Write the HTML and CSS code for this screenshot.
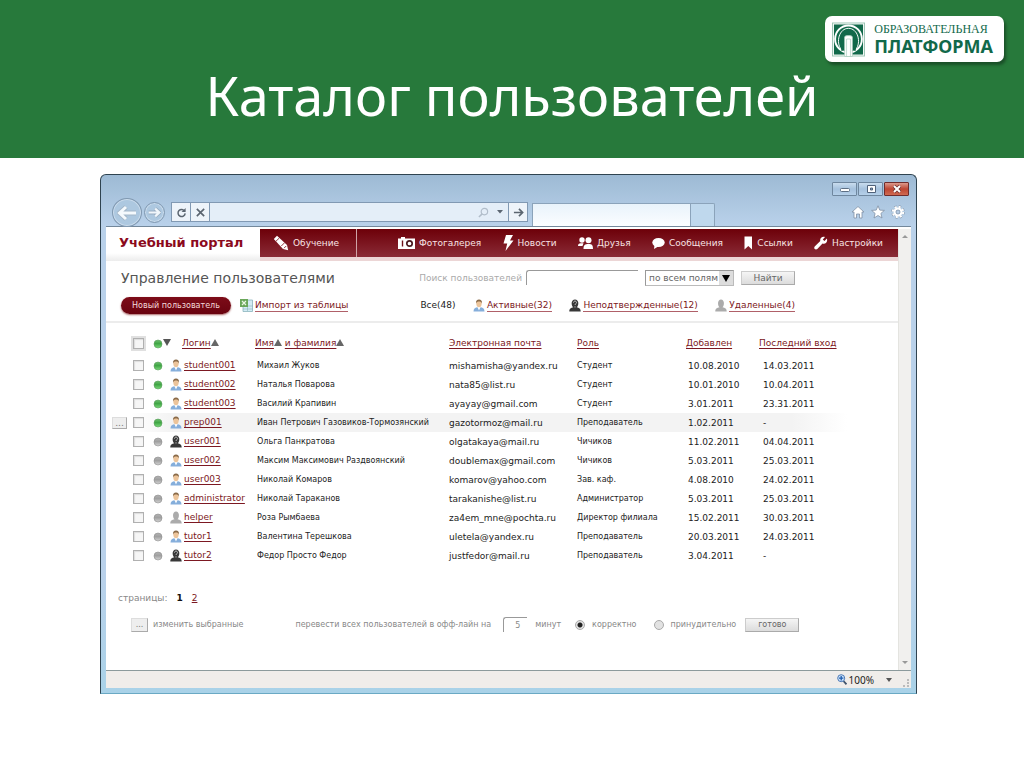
FILE: index.html
```html
<!DOCTYPE html>
<html lang="ru">
<head>
<meta charset="utf-8">
<title>Каталог пользователей</title>
<link rel="stylesheet" href="styles.css">
</head>
<body>
<svg class="defs" aria-hidden="true">
  <defs>
    <linearGradient id="ball-green" x1="0" y1="0" x2="0" y2="1"><stop offset="0" stop-color="#6fbf70"/><stop offset=".45" stop-color="#3fa544"/><stop offset="1" stop-color="#7ddb7c"/></linearGradient>
    <linearGradient id="ball-gray" x1="0" y1="0" x2="0" y2="1"><stop offset="0" stop-color="#b4b4b4"/><stop offset=".45" stop-color="#a0a0a0"/><stop offset="1" stop-color="#d4d4d4"/></linearGradient>
    <symbol id="on" viewBox="0 0 10 10"><circle cx="5" cy="5" r="4" fill="url(#ball-green)" stroke="#5a9e5c" stroke-width=".6"/></symbol>
    <symbol id="off" viewBox="0 0 10 10"><circle cx="5" cy="5" r="4" fill="url(#ball-gray)" stroke="#8d8d8d" stroke-width=".6"/></symbol>
    <symbol id="user" viewBox="0 0 12 13"><path d="M.5 12.6C.5 9.5 2 8.6 4 8.2h4c2 .4 3.500 1.300 3.500 4.400z" fill="#85aedb"/><path d="M4.400 8h3.200L6 11.500z" fill="#fff"/><ellipse cx="6" cy="4.600" rx="2.700" ry="3.600" fill="#ecc49a"/><path d="M3 4.500C2.700 1.600 4 .4 6 .4s3.300 1.200 3 4.100C8.400 3 7.500 2.600 6 2.600S3.600 3 3 4.500z" fill="#8a6a48"/></symbol>
    <symbol id="pending" viewBox="0 0 12 13"><path d="M.3 12.600C.3 9.600 1.800 9 4.300 8.300 1.800 6 2 .4 6 .4s4.200 5.600 1.700 7.900c2.500.7 4 1.300 4 4.300z" fill="#383838"/><path d="M4.500 3.600c0-2 3-2 3 0C7.500 4.800 6 4.700 6 6M6 7.300v1.200" fill="none" stroke="#c4c4c4" stroke-width="1"/></symbol>
    <symbol id="removed" viewBox="0 0 12 13"><path d="M.3 12.600C.3 9.600 1.800 9 4.500 8.300 2.300 6 2.500.4 6 .4s3.700 5.600 1.500 7.900c2.700.7 4.200 1.300 4.200 4.300z" fill="#ababab"/></symbol>
  </defs>
</svg>

<header class="banner">
  <div class="brand">
    <svg class="brand-mark" viewBox="0 0 34 35">
      <rect x=".5" y=".5" width="33" height="34" fill="#fff" stroke="#9cc5b3"/>
      <rect x="2" y="2" width="30" height="31" fill="#11694a"/>
      <ellipse cx="17" cy="17" rx="13.800" ry="14" fill="#11694a" stroke="#fff" stroke-width="2"/>
      <path d="M9.500 28C3.500 20 7.500 6 17 6s13.500 14 7.500 22" fill="none" stroke="#fff" stroke-width="1"/>
      <path d="M10.500 29V12.500h13V29" fill="none" stroke="#11694a" stroke-width="2"/>
      <path d="M13 35V15c0-2 8-2 8 0v20z" fill="#fff" stroke="#a8cdbc" stroke-width=".8"/>
      <path d="M15 35V17h4v18" fill="none" stroke="#a8cdbc" stroke-width=".7"/>
    </svg>
    <div class="brand-text"><span class="brand-top">ОБРАЗОВАТЕЛЬНАЯ</span><span class="brand-bottom">ПЛАТФОРМА</span></div>
  </div>
  <h1>Каталог пользователей</h1>
</header>

<main class="stage">
<section class="window">
  <div class="titlebar">
    <button class="wbtn" aria-label="Свернуть"><svg viewBox="0 0 12 10"><rect x="1.500" y="4.500" width="9" height="3" rx="1" fill="#fff" stroke="#5d6f84"/></svg></button>
    <button class="wbtn" aria-label="Развернуть"><svg viewBox="0 0 12 10"><path d="M2.500 1.500h8v7h-8z" fill="#fff" stroke="#50627a"/><path d="M5.500 4h2v2h-2z" fill="#8eaac8" stroke="#50627a"/></svg></button>
    <button class="wbtn close" aria-label="Закрыть"><svg viewBox="0 0 12 10"><path d="M3 2l6 6M9 2L3 8" stroke="#6b2f2f" stroke-width="3.400"/><path d="M3 2l6 6M9 2L3 8" stroke="#fff" stroke-width="2"/></svg></button>
  </div>

  <div class="toolbar">
    <button class="round big" aria-label="Назад"><svg viewBox="0 0 20 16"><path d="M9 2L2.500 8 9 14M3 8h16" fill="none" stroke="#a3b6c8" stroke-width="5"/><path d="M9 2L2.500 8 9 14M3 8h16" fill="none" stroke="#f4f9fd" stroke-width="3"/></svg></button>
    <button class="round" aria-label="Вперёд"><svg viewBox="0 0 20 16"><path d="M11 2l6.500 6L11 14M17 8H1" fill="none" stroke="#98adc2" stroke-width="6"/><path d="M11 2l6.500 6L11 14M17 8H1" fill="none" stroke="#f0f6fb" stroke-width="3.400"/></svg></button>
    <div class="address">
      <button aria-label="Обновить"><svg viewBox="0 0 12 12"><path d="M9.500 4.600A3.900 3.900 0 1 0 10 7" fill="none" stroke="#5b6570" stroke-width="1.600"/><path d="M10.500 1v4.500H6z" fill="#5b6570"/></svg></button>
      <button aria-label="Остановить"><svg viewBox="0 0 12 12"><path d="M2 2l8 8M10 2l-8 8" stroke="#5b6570" stroke-width="1.800"/></svg></button>
      <input type="text" aria-label="Адрес">
      <svg class="find" viewBox="0 0 12 12"><circle cx="7" cy="5" r="3.500" fill="none" stroke="#b1bdca" stroke-width="1.300"/><path d="M4.500 7.500L1 11" stroke="#b1bdca" stroke-width="1.600"/></svg>
      <svg class="drop" viewBox="0 0 6 4"><path d="M0 0h6L3 3.500z" fill="#5b6672"/></svg>
      <button aria-label="Перейти"><svg viewBox="0 0 12 12"><path d="M1 6h9M6.500 2l4 4-4 4" fill="none" stroke="#5b6570" stroke-width="1.800"/></svg></button>
    </div>
    <div class="tab"></div>
    <div class="newtab"></div>
    <div class="tools">
      <svg viewBox="0 0 14 14"><path d="M1 7l6-5.500L13 7h-2v6H8.500V9h-3v4H3V7z" fill="#fff" stroke="#8091a5" stroke-width=".8"/></svg>
      <svg viewBox="0 0 14 14"><path d="M7 .8l1.800 4.300 4.600.3L9.900 8.400l1.100 4.600L7 10.500 3 13l1.100-4.600L.6 5.400l4.600-.3z" fill="#fff" stroke="#8091a5" stroke-width=".8"/></svg>
      <svg viewBox="0 0 14 14"><circle cx="7" cy="7" r="5.400" fill="none" stroke="#8091a5" stroke-width="2.600" stroke-dasharray="2.300 1.940"/><circle cx="7" cy="7" r="5.200" fill="none" stroke="#fff" stroke-width="2" stroke-dasharray="2.100 1.984"/><circle cx="7" cy="7" r="3.400" fill="#b5cbe3" stroke="#fff" stroke-width="2.200"/><circle cx="7" cy="7" r="2" fill="#b5cbe3" stroke="#8091a5" stroke-width=".7"/></svg>
    </div>
  </div>

  <div class="viewport">
    <div class="page">
      <nav class="nav">
        <a class="site" href="#">Учебный портал</a>
        <a class="learn" href="#"><svg width="16" height="16" viewBox="0 0 16 16"><path d="M.8 4L4 .8 14 10l1.200 5.200L10 14z" fill="#fff"/><path d="M3 6.200L6.300 3M8.300 11l3.200-3.200M11 13.200l2.300-2.300" stroke="#7b0a14" stroke-width=".8"/></svg>Обучение</a>
        <div class="menu">
          <a href="#"><svg width="17" height="12" viewBox="0 0 17 12"><path d="M0 1.500h3V0h4v1.500h10V12H0z" fill="#fff"/><path d="M4.500 3.500v6" stroke="#6f1019" stroke-width="1.400"/><circle cx="11.500" cy="6.500" r="2.700" fill="none" stroke="#4b1a20" stroke-width="1.700"/></svg>Фотогалерея</a>
          <a href="#"><svg width="11" height="16" viewBox="0 0 11 16"><path d="M3 0h7L7 5.500h3.500L2.500 16l1.700-7.500H.5z" fill="#fff"/></svg>Новости</a>
          <a href="#"><svg width="15" height="12" viewBox="0 0 15 12"><circle cx="4" cy="3" r="2.700" fill="#fff"/><circle cx="10.500" cy="3.200" r="3" fill="#fff"/><path d="M0 9c0-2 1-2.600 2.500-2.800h3L4.500 9zM5.500 12c0-4 1.500-5 5-5s4.500 1 4.500 5z" fill="#fff"/></svg>Друзья</a>
          <a href="#"><svg width="13" height="12" viewBox="0 0 13 12"><ellipse cx="6.500" cy="5.500" rx="6.200" ry="4.500" fill="#fff"/><path d="M2.500 8L2 12l5-3z" fill="#fff"/></svg>Сообщения</a>
          <a href="#"><svg width="9" height="14" viewBox="0 0 9 14"><path d="M.5.500h7.500v13L4.300 10 .5 13.500z" fill="#fff"/></svg>Ссылки</a>
          <a href="#"><svg width="14" height="14" viewBox="0 0 14 14"><path d="M12.800 2.500L10.500 5 8.800 3.500 11 1C8.500-.3 5.500 2 6.300 5L.7 10.500c-1.500 2 .8 3.800 2.600 2.500L8.500 7.500c3.200 1 5.600-2 4.300-5z" fill="#fff"/></svg>Настройки</a>
        </div>
      </nav>

      <div class="head">
        <h2>Управление пользователями</h2>
        <form class="search">
          <label for="q">Поиск пользователей</label>
          <input class="field" id="q" type="text">
          <span class="pick"><select aria-label="Область поиска"><option>по всем полям</option></select><svg viewBox="0 0 14 14" aria-hidden="true"><path d="M3 4h8l-4 7z" fill="#000"/></svg></span>
          <button class="btn" type="button">Найти</button>
        </form>
      </div>

      <div class="filters">
        <button class="pill">Новый пользователь</button>
        <a class="import" href="#"><svg width="13" height="13" viewBox="0 0 13 13"><path d="M3 1h9.500v11.500H3z" fill="#d3ecf4" stroke="#8ab4bc" stroke-width=".8"/><path d="M7.500 1v11M3 7h9.500M3 10h9.500" stroke="#8ab4bc" stroke-width=".6"/><path d="M0 0h8v8H0z" fill="#6aa75a"/><path d="M2 2l4 4M6 2L2 6" stroke="#eaf6e4" stroke-width="1.200"/></svg><span>Импорт из таблицы</span></a>
        <div class="states">
          <span class="all">Все(48)</span>
          <a href="#"><svg class="ico"><use href="#user"/></svg><span>Активные(32)</span></a>
          <a href="#"><svg class="ico"><use href="#pending"/></svg><span>Неподтвержденные(12)</span></a>
          <a href="#"><svg class="ico"><use href="#removed"/></svg><span>Удаленные(4)</span></a>
        </div>
      </div>

      <table class="users">
        <colgroup><col class="c-more"><col class="c-check"><col class="c-dot"><col class="c-login"><col class="c-name"><col class="c-mail"><col class="c-role"><col class="c-date"><col></colgroup>
        <thead><tr>
          <th></th><th class="allcheck"><input type="checkbox" aria-label="Выбрать всех"></th>
          <th class="sortdot"><svg class="dot"><use href="#on"/></svg><i class="down"></i></th>
          <th class="h-login"><a href="#">Логин</a><i class="up"></i></th>
          <th><a href="#">Имя</a><i class="up"></i> <a href="#">и фамилия</a><i class="up"></i></th>
          <th><a href="#">Электронная почта</a></th><th><a href="#">Роль</a></th><th><a href="#">Добавлен</a></th><th><a href="#">Последний вход</a></th>
        </tr></thead>
        <tbody>
        <tr><td></td><td><input type="checkbox" aria-label="student001"></td><td><svg class="dot"><use href="#on"/></svg></td><td><svg class="ico"><use href="#user"/></svg><a href="#">student001</a></td><td>Михаил Жуков</td><td>mishamisha@yandex.ru</td><td>Студент</td><td>10.08.2010</td><td>14.03.2011</td></tr>
        <tr><td></td><td><input type="checkbox" aria-label="student002"></td><td><svg class="dot"><use href="#on"/></svg></td><td><svg class="ico"><use href="#user"/></svg><a href="#">student002</a></td><td>Наталья Поварова</td><td>nata85@list.ru</td><td>Студент</td><td>10.01.2010</td><td>10.04.2011</td></tr>
        <tr><td></td><td><input type="checkbox" aria-label="student003"></td><td><svg class="dot"><use href="#on"/></svg></td><td><svg class="ico"><use href="#user"/></svg><a href="#">student003</a></td><td>Василий Крапивин</td><td>ayayay@gmail.com</td><td>Студент</td><td>3.01.2011</td><td>23.31.2011</td></tr>
        <tr class="current"><td><button class="more" aria-label="Действия">...</button></td><td><input type="checkbox" aria-label="prep001"></td><td><svg class="dot"><use href="#on"/></svg></td><td><svg class="ico"><use href="#user"/></svg><a href="#">prep001</a></td><td>Иван Петрович Газовиков-Тормозянский</td><td>gazotormoz@mail.ru</td><td>Преподаватель</td><td>1.02.2011</td><td>-</td></tr>
        <tr><td></td><td><input type="checkbox" aria-label="user001"></td><td><svg class="dot"><use href="#off"/></svg></td><td><svg class="ico"><use href="#pending"/></svg><a href="#">user001</a></td><td>Ольга Панкратова</td><td>olgatakaya@mail.ru</td><td>Чичиков</td><td>11.02.2011</td><td>04.04.2011</td></tr>
        <tr><td></td><td><input type="checkbox" aria-label="user002"></td><td><svg class="dot"><use href="#off"/></svg></td><td><svg class="ico"><use href="#user"/></svg><a href="#">user002</a></td><td>Максим Максимович Раздвоянский</td><td>doublemax@gmail.com</td><td>Чичиков</td><td>5.03.2011</td><td>25.03.2011</td></tr>
        <tr><td></td><td><input type="checkbox" aria-label="user003"></td><td><svg class="dot"><use href="#off"/></svg></td><td><svg class="ico"><use href="#user"/></svg><a href="#">user003</a></td><td>Николай Комаров</td><td>komarov@yahoo.com</td><td>Зав. каф.</td><td>4.08.2010</td><td>24.02.2011</td></tr>
        <tr><td></td><td><input type="checkbox" aria-label="administrator"></td><td><svg class="dot"><use href="#off"/></svg></td><td><svg class="ico"><use href="#user"/></svg><a href="#">administrator</a></td><td>Николай Тараканов</td><td>tarakanishe@list.ru</td><td>Администратор</td><td>5.03.2011</td><td>25.03.2011</td></tr>
        <tr><td></td><td><input type="checkbox" aria-label="helper"></td><td><svg class="dot"><use href="#off"/></svg></td><td><svg class="ico"><use href="#removed"/></svg><a href="#">helper</a></td><td>Роза Рымбаева</td><td>za4em_mne@pochta.ru</td><td>Директор филиала</td><td>15.02.2011</td><td>30.03.2011</td></tr>
        <tr><td></td><td><input type="checkbox" aria-label="tutor1"></td><td><svg class="dot"><use href="#off"/></svg></td><td><svg class="ico"><use href="#user"/></svg><a href="#">tutor1</a></td><td>Валентина Терешкова</td><td>uletela@yandex.ru</td><td>Преподаватель</td><td>20.03.2011</td><td>24.03.2011</td></tr>
        <tr><td></td><td><input type="checkbox" aria-label="tutor2"></td><td><svg class="dot"><use href="#off"/></svg></td><td><svg class="ico"><use href="#pending"/></svg><a href="#">tutor2</a></td><td>Федор Просто Федор</td><td>justfedor@mail.ru</td><td>Преподаватель</td><td>3.04.2011</td><td>-</td></tr>
        </tbody>
      </table>

      <div class="pages"><span>страницы:</span><b>1</b><a href="#">2</a></div>

      <form class="bulk">
        <button class="more large" type="button" aria-label="Изменить">...</button>
        <span class="edit">изменить выбранные</span>
        <label for="min">перевести всех пользователей в офф-лайн на</label>
        <input class="field minutes" id="min" type="text" value="5">
        <span class="unit">минут</span>
        <label class="radio"><input type="radio" name="mode" checked>корректно</label>
        <label class="radio"><input type="radio" name="mode">принудительно</label>
        <button class="btn done" type="button">готово</button>
      </form>
    </div>
    <div class="scroll"><i class="up"></i><i class="down"></i></div>
  </div>

  <footer class="status">
    <svg width="10" height="11" viewBox="0 0 10 11"><path d="M6 6.500l3.500 3.800" stroke="#3f536b" stroke-width="1.800"/><circle cx="4.200" cy="4.200" r="3.500" fill="#cfe4fa" stroke="#4b78b5"/><path d="M4.200 2v4.400M2 4.200h4.400" stroke="#1f5db0" stroke-width="1.300"/></svg>
    <span>100%</span><i class="down"></i><i class="grip"></i>
  </footer>
</section>
</main>
</body>
</html>
```

FILE: styles.css
```css
* { box-sizing: border-box; }
body { margin: 0; background: #fff; font: 9px/12px "DejaVu Sans", sans-serif; color: #222; }
button, input, select { font: inherit; color: inherit; margin: 0; padding: 0; border-radius: 0; }
h1, h2 { margin: 0; font-weight: normal; }
svg { display: block; flex: none; }
.defs { position: absolute; width: 0; height: 0; }

.banner { position: relative; min-height: 158px; padding-top: 58px; background: #27793b; text-align: center; }
.banner h1 { color: #fff; font: 54px/74px "Noto Sans", sans-serif; }
.brand { position: absolute; top: 16px; right: 20px; display: flex; align-items: center; gap: 9px; height: 46px; padding: 0 11px 0 7px; background: #fff; border-radius: 7px; box-shadow: 2px 3px 3px #1a4f28; text-align: left; }
.brand-mark { width: 33px; height: 35px; }
.brand-text { display: flex; flex-direction: column; color: #11694a; }
.brand-top { font: 12px/14px "Liberation Serif", serif; }
.brand-bottom { font: bold 18px/21px "Noto Sans", sans-serif; }

.stage { padding: 16px 107px 0 100px; }
.window { padding: 0 5px 5px; border: 1px solid #2f4350; border-bottom-color: #6aa9c4; border-radius: 6px 6px 0 0; background: linear-gradient(#9dbad4, #b9d1ea 50px, #b9d1ea 400px, #a9d2e8); }

.titlebar { display: flex; justify-content: flex-end; gap: 1px; padding: 7px 2px 0; height: 23px; }
.wbtn { display: grid; place-items: center; width: 25px; height: 14px; border: 1px solid #6f879f; border-radius: 1px; background: linear-gradient(#c9dcee, #a5c1dd 50%, #b5d0e9); }
.wbtn svg { width: 12px; height: 10px; }
.close { border-color: #702c2c; background: linear-gradient(#dc9a8c, #bd4532 50%, #cf6a52); }

.toolbar { display: flex; align-items: flex-end; height: 28px; }
.round { display: grid; place-items: center; width: 21px; height: 21px; margin: 0 0 3px 2px; border: 1px solid #8199b1; border-radius: 50%; background: #adc8e0; box-shadow: inset 0 0 0 1px #cbdcec; }
.round svg { width: 13px; height: 11px; }
.round.big { width: 30px; height: 29px; margin: 0 0 -1px 6px; }
.round.big svg { width: 20px; height: 16px; }
.address { display: flex; align-items: center; flex: 1; height: 20px; margin: 0 4px 4px 6px; border: 1px solid #8199b3; background: #e4eef8; }
.address button { display: grid; place-items: center; width: 19px; height: 18px; border: 0; border-right: 1px solid #8199b3; background: #eef4fa; }
.address button:last-child { border-right: 0; border-left: 1px solid #8199b3; }
.address button svg { width: 11px; height: 11px; }
.address input { flex: 1; min-width: 0; height: 18px; border: 0; background: none; font-size: 11px; }
.find { width: 11px; height: 11px; }
.drop { width: 6px; height: 4px; margin: 0 5px 0 8px; }
.tab { width: 159px; height: 23px; border: 1px solid #8ba3ba; border-bottom: 0; background: linear-gradient(#e9f3fb, #fbfdff); }
.newtab { width: 24px; height: 23px; border: 1px solid #8ba3ba; border-left: 0; border-bottom: 0; border-radius: 0 2px 0 0; background: #bfd8ed; }
.tools { display: flex; gap: 6px; margin: 0 6px 7px 136px; }
.tools svg { width: 14px; height: 14px; }

.viewport { display: flex; min-height: 444px; border-top: 1px solid #73889b; background: #fff; padding-top: 2px; }
.page { flex: 1; min-width: 0; }
.scroll { display: flex; flex-direction: column; justify-content: space-between; align-items: center; width: 13px; padding: 6px 0; border-left: 1px solid #e4e4e0; background: #f1f0ee; }
.up, .down { display: inline-block; border: 4px solid transparent; }
.up { border-top: 0; border-bottom: 7px solid #666; }
.down { border-bottom: 0; border-top: 7px solid #555; }
.scroll i { border-width: 3px; }
.scroll .up { border-top: 0; border-bottom-color: #999; }
.scroll .down { border-bottom: 0; border-top-color: #999; }

.nav { display: flex; align-items: stretch; height: 32px; border-bottom: 4px solid #ecd6d6; background: linear-gradient(#6d0009, #8a2b36); background-clip: padding-box; }
.nav a { display: flex; align-items: center; gap: 4px; color: #f8e4e4; text-decoration: none; }
.nav .site { width: 154px; margin-bottom: -4px; padding: 0 0 5px 13px; background: linear-gradient(#fff 24px, #ececec); color: #8b0a1c; font: bold 13px/18px "DejaVu Sans", sans-serif; white-space: nowrap; }
.learn { width: 97px; padding-left: 13px; border-right: 1px solid #cfa4a7; }
.menu { flex: 1; display: flex; justify-content: space-between; padding: 0 15px 0 41px; }

.head { display: flex; align-items: center; padding: 4px 103px 0 15px; height: 29px; }
.head h2 { font-size: 14px; line-height: 20px; color: #555; white-space: nowrap; }
.search { display: flex; align-items: center; margin-left: auto; color: #aaa; }
.field { width: 112px; height: 15px; margin-left: 4px; border: 0; border-top: 1px solid #999; border-left: 1px solid #999; border-radius: 3px 0 0 0; background: #fff; }
.pick { position: relative; margin: 0 7px; }
.pick select { display: block; width: 89px; height: 16px; padding-left: 3px; appearance: none; border: 1px solid #bbb; border-top-color: #999; border-left-color: #999; background: #fff; color: #666; }
.pick svg { position: absolute; top: 1px; right: 1px; width: 14px; height: 14px; background: #ddd; }
.btn { width: 54px; height: 14px; border: 1px solid #ccc; border-right-color: #aaa; border-bottom-color: #aaa; background: linear-gradient(#f5f5f5, #dcdcdc); color: #666; line-height: 10px; }

.filters { display: flex; align-items: center; height: 33px; padding: 0 103px 0 15px; border-bottom: 2px solid #ececec; }
.pill { width: 110px; height: 17px; border: 0; border-radius: 9px; background: linear-gradient(#7d0c18, #6a0410); box-shadow: 0 1px 2px #a66; color: #f5dada; font-size: 8px; white-space: nowrap; }
a, .filters a { color: #7c1822; }
.filters a { display: flex; align-items: center; gap: 2px; text-decoration: none; }
.filters a span { border-bottom: 1px solid #b06068; line-height: 11px; white-space: nowrap; }
.filters .import { margin-left: 9px; }
.states { display: flex; justify-content: space-between; flex: 1; margin-left: 72px; }
.ico { width: 12px; height: 13px; }

.users { width: calc(100% - 12px); margin: 7px 6px 0; border-collapse: collapse; table-layout: fixed; }
.c-more { width: 21px; } .c-check { width: 20px; } .c-dot { width: 17px; } .c-login { width: 85px; } .c-name { width: 194px; } .c-mail { width: 128px; } .c-role { width: 109px; } .c-date { width: 73px; }
.users th, .users td { height: 19px; padding: 0; text-align: left; font-weight: normal; white-space: nowrap; }
.users th { height: 26px; }
.users td:nth-child(5), .users td:nth-child(7) { font-size: 8px; }
.users td:nth-child(5), .users td:nth-child(8) { padding-left: 2px; }
.users td:nth-child(9) { padding-left: 4px; }
.users a { text-underline-offset: 2px; }
.users .ico, .users .dot { display: inline-block; vertical-align: middle; }
.users .ico { margin-right: 2px; }
.dot { width: 10px; height: 10px; }
.users .h-login { padding-left: 12px; }
.users input { display: block; appearance: none; width: 11px; height: 11px; border: 1px solid #b0b0b0; background: #f6f6f6; box-shadow: inset 1px 1px 1px #ddd; }
.users .allcheck input { outline: 2px solid #e0e0e0; }
.current { background: linear-gradient(90deg, #fff 20px, #f3f3f3 60px, #f3f3f3 680px, #fff 735px); }
.more { display: block; width: 15px; height: 12px; border: 1px solid #ddd; border-right-color: #aaa; border-bottom-color: #aaa; background: #eee; color: #777; line-height: 6px; }
.more.large { width: 17px; height: 14px; }

.pages { display: flex; gap: 9px; padding: 27px 12px 0; color: #888; }
.pages b { color: #111; }
.bulk { display: flex; align-items: center; padding: 13px 0 0 25px; color: #888; font-size: 8px; white-space: nowrap; }
.edit { margin: 0 52px 0 5px; }
.minutes { width: 24px; padding-left: 11px; margin: 0 8px 0 12px; }
.radio { display: flex; align-items: center; gap: 7px; margin-left: 14px; }
.radio + .radio { margin-left: 17px; }
.radio input { appearance: none; width: 10px; height: 10px; border: 1px solid #aaa; border-radius: 50%; background: #e2e2e2; }
.radio input:checked { background: radial-gradient(#222 2px, #e2e2e2 3px); }
.done { margin-left: 9px; }

.status { display: flex; align-items: center; justify-content: flex-end; height: 18px; border-top: 1px solid #8c9a9c; background: #f0edea; color: #222; font: 10px/14px "Noto Sans", sans-serif; }
.status span { margin: 0 12px 0 2px; }
.status .down { border-width: 4px 3px 0; }
.grip { width: 6px; height: 8px; margin: 6px 2px 0 11px; border-right: 2px dotted #bbb; border-bottom: 2px dotted #bbb; }
```
